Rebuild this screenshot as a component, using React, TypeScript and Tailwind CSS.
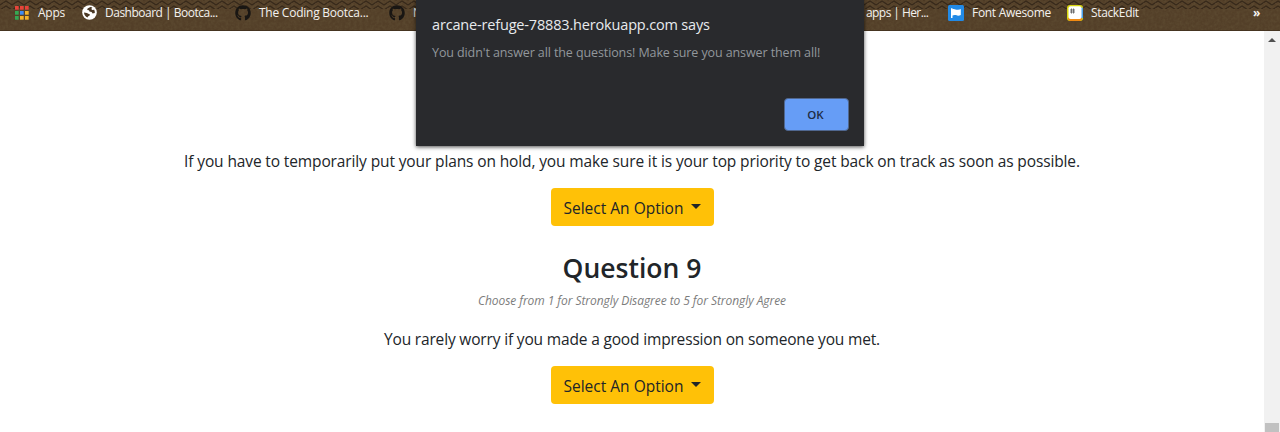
import type { ReactNode } from 'react';
import { FaGithub } from 'react-icons/fa';

const APP_DOTS = [
  '#e8443a', '#e8443a', '#e8443a',
  '#35a853', '#3f8cf4', '#f5b32a',
  '#35a853', '#f5b32a', '#f5b32a',
];

function AppsIcon() {
  return (
    <svg width="14" height="14" viewBox="0 0 14 14" className="shrink-0">
      {APP_DOTS.map((fill, i) => (
        <rect key={i} x={(i % 3) * 5} y={Math.floor(i / 3) * 5} width="3.7" height="3.7" fill={fill} />
      ))}
    </svg>
  );
}

function GlobeIcon() {
  return (
    <svg width="15" height="15" viewBox="0 0 15 15" className="shrink-0">
      <circle cx="7.5" cy="7.5" r="7.3" fill="#fff" />
      <path d="M8.4 2 L5.6 3.4 L5.2 5 L7 5.2 L7.4 6.6 L9.6 7 L10.6 8.4 L12.8 8 A5.6 5.6 0 0 0 12.2 4.8 L10 5 L9.4 3.8 L10.4 2.6 A5.8 5.8 0 0 0 8.4 2Z" fill="#4a3825" />
      <path d="M2 7.6 L4.8 8 L8 9.4 L7.6 10.6 L6 11.4 L5.6 12.6 A5.8 5.8 0 0 1 2 7.6Z" fill="#4a3825" />
    </svg>
  );
}

function FlagIcon() {
  return (
    <svg width="16" height="16" viewBox="0 0 16 16" className="shrink-0">
      <rect width="16" height="16" rx="1.5" fill="#228ae6" />
      <path d="M3 3.2 H4.5 V4.3 C6.5 3.4 8 5.2 10 4.8 C11.2 4.6 12 4.2 12.8 3.9 V10 C10.5 11.2 9.3 10.6 8 10.1 C6.6 9.7 5.6 9.9 4.5 10.4 V13 H3Z" fill="#fff" />
    </svg>
  );
}

function StackEditIcon() {
  return (
    <svg width="16" height="16" viewBox="0 0 16 16" className="shrink-0">
      <rect width="16" height="16" rx="3" fill="#d7d50e" />
      <path d="M16 3 V13 L13 14 V2Z" fill="#4da3ee" />
      <path d="M1 13 H15 A3 3 0 0 1 13 16 H3 A3 3 0 0 1 1 13Z" fill="#f08a12" />
      <rect x="1.5" y="1.2" width="13" height="12.8" rx="2" fill="#fff" />
      <path d="M4.5 3.5 V8.5 M6.5 3.5 V8.5 M3 5 H8 M3 7 H8" stroke="#666" strokeWidth="0.9" />
    </svg>
  );
}

function BarTexture() {
  return (
    <svg width="1280" height="31" className="absolute inset-0">
      <defs>
        <pattern id="weave" width="12" height="5" patternUnits="userSpaceOnUse">
          <path d="M0 5 L6 1 L12 5 M0 0 L6 -4 L12 0" fill="none" stroke="#2b1f14" strokeWidth="1.2" />
          <path d="M3 3 L8 6" stroke="#604a31" strokeWidth="0.6" />
        </pattern>
        <filter id="grain" x="0" y="0" width="100%" height="100%">
          <feTurbulence type="fractalNoise" baseFrequency="0.35" numOctaves="2" seed="4" />
          <feColorMatrix values="0 0 0 0 0.13  0 0 0 0 0.09  0 0 0 0 0.04  0.9 0 0 0 -0.3" />
        </filter>
      </defs>
      <rect width="1280" height="31" filter="url(#grain)" />
      <rect width="1280" height="9" fill="url(#weave)" opacity="0.75" />
      <rect y="30" width="1280" height="1" fill="#3b2c1a" opacity="0.6" />
    </svg>
  );
}

function Bookmark({ icon, className, children }: { icon?: ReactNode; className: string; children: ReactNode }) {
  return (
    <div className={`flex h-[25px] shrink-0 items-center whitespace-nowrap text-[12px] text-[#f4f2ef] ${className}`}>
      {icon}
      <span>{children}</span>
    </div>
  );
}

function BookmarksBar() {
  return (
    <header className="relative h-[31px] overflow-hidden bg-[#533f28]">
      <BarTexture />
      <div className="relative flex h-full justify-between">
        <div className="flex w-[417px] overflow-hidden pl-[15px]">
          <Bookmark icon={<AppsIcon />} className="w-[67px] gap-[9px] tracking-[-0.25px]">Apps</Bookmark>
          <Bookmark icon={<GlobeIcon />} className="w-[153px] gap-2 tracking-[-0.5px]">Dashboard | Bootca...</Bookmark>
          <Bookmark icon={<FaGithub size={16} color="#191613" className="shrink-0" />} className="w-[154px] gap-2 tracking-[-0.24px]">The Coding Bootca...</Bookmark>
          <Bookmark icon={<FaGithub size={16} color="#191613" className="shrink-0" />} className="gap-2">N</Bookmark>
        </div>
        <div className="flex w-[414px]">
          <Bookmark className="w-[82px] tracking-[-0.57px]">apps | Her...</Bookmark>
          <Bookmark icon={<FlagIcon />} className="w-[119px] gap-2 tracking-[-0.3px]">Font Awesome</Bookmark>
          <Bookmark icon={<StackEditIcon />} className="w-[186px] gap-2 tracking-[-0.35px]">StackEdit</Bookmark>
          <Bookmark className="font-bold">»</Bookmark>
        </div>
      </div>
    </header>
  );
}

function OptionButton() {
  return (
    <button className="flex h-[38px] w-[163px] items-center rounded-[4px] bg-[#ffc107] pt-[3px] pl-[13px] text-[15.5px] text-[#212529]">
      Select An Option
      <span className="mb-[5px] ml-[8px] border-x-[5px] border-t-[5px] border-x-transparent border-t-[#212529]" />
    </button>
  );
}

function Dialog() {
  return (
    <div
      role="alertdialog"
      className="absolute top-0 left-[416px] flex h-[146px] w-[448px] flex-col bg-[#292a2d] px-4 shadow-[0_1px_4px_rgba(0,0,0,0.7)]"
    >
      <h1 className="mt-[15px] text-[14.5px] leading-5 tracking-[-0.17px] whitespace-nowrap text-[#e8eaed]">
        arcane-refuge-78883.herokuapp.com says
      </h1>
      <p className="mt-[8px] text-[12.5px] leading-5 tracking-[-0.1px] whitespace-nowrap text-[#92979c]">
        You didn't answer all the questions! Make sure you answer them all!
      </p>
      <button className="mt-[35px] mr-[-1px] h-[33px] w-[65px] self-end rounded-[4px] border border-[#50678f] bg-[#669df6] pr-[2px] text-[11.5px] font-semibold text-[#202c44]">
        OK
      </button>
    </div>
  );
}

function Scrollbar() {
  return (
    <div className="flex w-4 flex-col items-center justify-between bg-[#f1f1f1] pt-[7px]">
      <span className="border-x-4 border-b-4 border-x-transparent border-b-[#505050]" />
      <span className="h-[9px] w-[14px] bg-[#c1c1c1]" />
    </div>
  );
}

export default function App() {
  return (
    <div className="relative flex h-[432px] w-[1280px] flex-col overflow-hidden bg-white font-['Open_Sans','Noto_Sans',sans-serif]">
      <BookmarksBar />
      <div className="flex min-h-0 flex-1">
        <main className="flex flex-1 flex-col items-center pt-[118px] text-[#212529]">
          <p className="text-[15.5px] leading-6 tracking-[-0.125px] whitespace-nowrap">
            If you have to temporarily put your plans on hold, you make sure it is your top priority to get back on track as soon as possible.
          </p>
          <div className="mt-[15px]"><OptionButton /></div>
          <h3 className="mt-[25px] text-[26.5px] leading-[34px] font-semibold whitespace-nowrap">Question 9</h3>
          <p className="mt-[6px] text-[12px] leading-5 tracking-[-0.065px] whitespace-nowrap text-[#7c7c7c] italic">
            Choose from 1 for Strongly Disagree to 5 for Strongly Agree
          </p>
          <p className="mt-[16px] text-[15.5px] leading-6 tracking-[-0.165px] whitespace-nowrap">
            You rarely worry if you made a good impression on someone you met.
          </p>
          <div className="mt-[15px]"><OptionButton /></div>
        </main>
        <Scrollbar />
      </div>
      <Dialog />
    </div>
  );
}
